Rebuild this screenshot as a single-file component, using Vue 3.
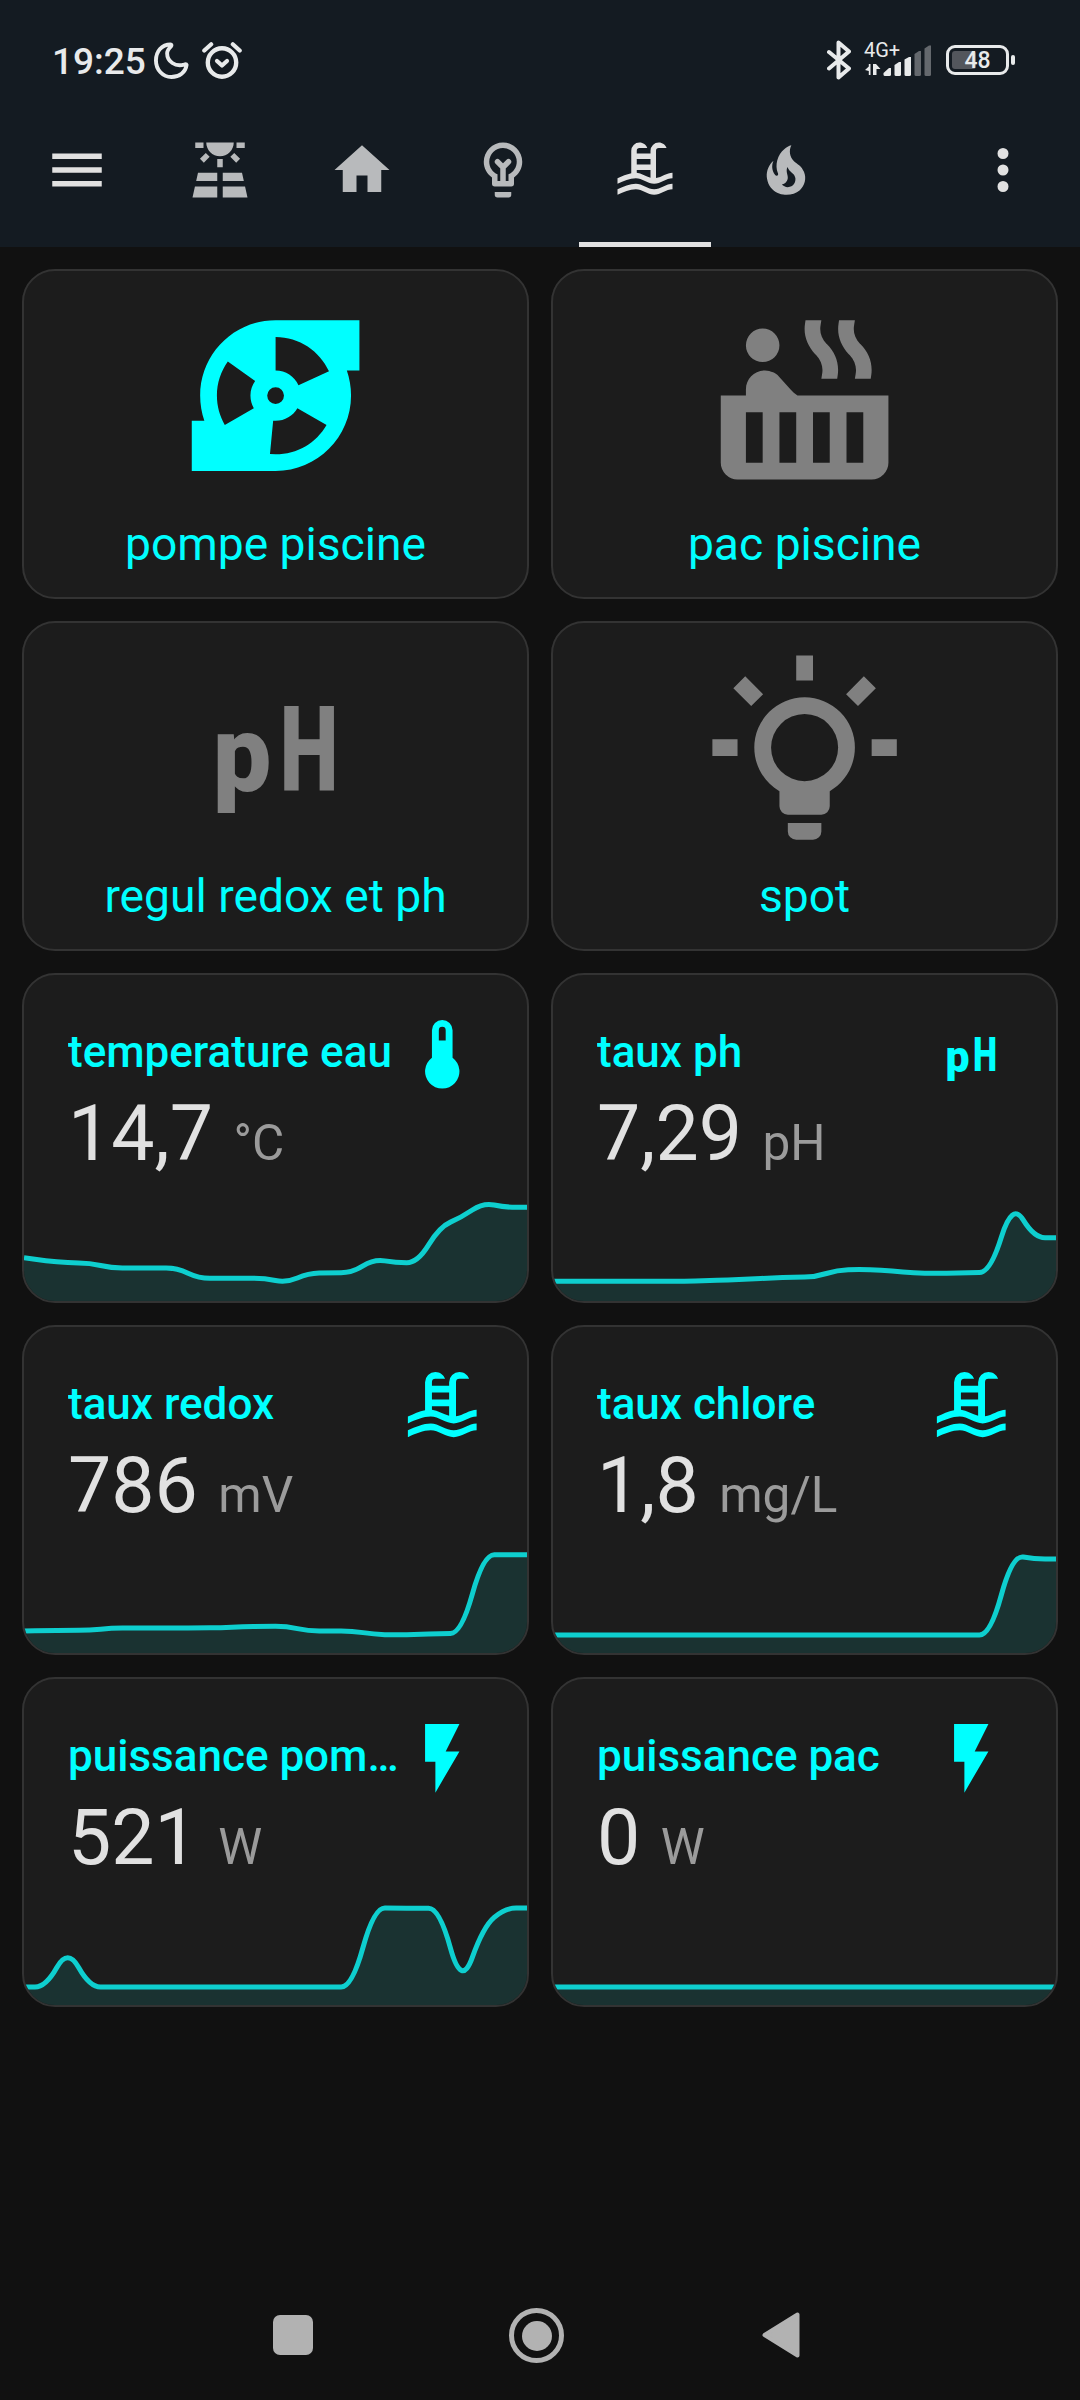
<template>
  <div class="screen">
    <header class="app-header">
      <!-- status bar -->
      <div class="status-bar">
        <span class="time">19:25</span>
        <svg class="moon" viewBox="0 0 36 38">
          <path
            d="M17 2.5C8 2.5 2 9.500 2 19C2 28.500 9 36 18 36C26 36 32.500 31 33.500 23.500C33.200 22.500 32 22.800 31 23.200C22 26 13.500 20 13.500 11.500C13.500 8.500 15.500 6.500 17.500 4.500C18.300 3.500 18 2.500 17 2.500Z"
            fill="none"
            stroke="#e8eaeb"
            stroke-width="4"
            stroke-linejoin="round"
          />
        </svg>
        <svg class="alarm" viewBox="0 0 40 38">
          <g fill="none" stroke="#e8eaeb" stroke-width="4.200" stroke-linecap="round">
            <circle cx="20" cy="21.500" r="14.200" stroke-width="4.400" />
            <path d="M2.300 9.500L9.200 3.300M37.700 9.500L30.800 3.300" />
            <path d="M15 20L20 24.500L25 20" stroke-linejoin="round" />
          </g>
        </svg>
        <div class="status-right">
          <svg class="bluetooth" viewBox="0 0 24 40">
            <path
              d="M2 12L22 28.500L11.500 37.500V2.500L22 11.500L2 28.500"
              fill="none"
              stroke="#e8eaeb"
              stroke-width="4"
              stroke-linejoin="round"
              stroke-linecap="round"
            />
          </svg>
          <div class="mobile">
            <span class="network">4G+</span>
            <svg class="signal" viewBox="0 0 68 32">
              <g fill="#e8eaeb">
                <path d="M5.500 20V31H3.800L3.800 27L0 26L3.800 22.500V20ZM8 20H11L15.500 25H11.500V31H8Z" />
                <path d="M18.500 29L24 24H26V30.500Q26 32 24.500 32H20Q18.500 32 18.500 30.500Z" />
                <path d="M29.500 21L34 18H36V30.500Q36 32 34.500 32H31Q29.500 32 29.500 30.500Z" />
                <path d="M39.500 15.500L44 13H46V30.500Q46 32 44.500 32H41Q39.500 32 39.500 30.500Z" />
              </g>
              <g fill="#64686d">
                <path d="M49.500 10L54 7H56V30.500Q56 32 54.500 32H51Q49.500 32 49.500 30.500Z" />
                <path d="M59.500 4.500L64 1.500H66V30.500Q66 32 64.500 32H61Q59.500 32 59.500 30.500Z" />
              </g>
            </svg>
          </div>
          <div class="battery">
            <div class="battery-level"></div>
            <span class="battery-text">48</span>
          </div>
          <div class="battery-nub"></div>
        </div>
      </div>

      <!-- toolbar -->
      <div class="toolbar">
        <button class="icon-btn">
          <svg viewBox="0 0 24 24"><path :d="icons.menu" /></svg>
        </button>
        <nav class="tabs">
          <div
            v-for="tab in tabs"
            :key="tab"
            class="tab"
            :class="{ active: tab === activeTab }"
            @click="activeTab = tab"
          >
            <svg viewBox="0 0 24 24">
              <path :d="icons[tab]" fill-rule="evenodd" />
              <path
                v-if="tab === 'bulb'"
                class="filament"
                d="M12 16.500V11M10 9L12 11L14 9"
              />
            </svg>
          </div>
        </nav>
        <button class="icon-btn">
          <svg viewBox="0 0 24 24"><path :d="icons.dots" /></svg>
        </button>
      </div>
    </header>

    <main class="grid">
      <div v-for="btn in buttons" :key="btn.name" class="card button-card">
        <svg class="big-icon" :class="{ on: btn.on }" viewBox="0 0 24 24">
          <g v-if="btn.icon === 'ph'" class="ph-text">
            <text x="4.5" y="17.2" font-size="12.8" textLength="7" lengthAdjust="spacingAndGlyphs">p</text>
            <text x="12.5" y="17" font-size="14.060" textLength="7" lengthAdjust="spacingAndGlyphs">H</text>
          </g>
          <path v-else :d="icons[btn.icon]" fill-rule="evenodd" />
        </svg>
        <div class="button-name">{{ btn.name }}</div>
      </div>

      <div v-for="sensor in sensors" :key="sensor.name" class="card sensor-card">
        <div class="sensor-header">
          <div class="sensor-name">{{ sensor.name }}</div>
          <svg class="sensor-icon" viewBox="0 0 24 24">
            <g v-if="sensor.icon === 'ph'" class="ph-text">
              <text x="4.5" y="17.2" font-size="12.8" textLength="7" lengthAdjust="spacingAndGlyphs">p</text>
              <text x="12.5" y="17" font-size="14.060" textLength="7" lengthAdjust="spacingAndGlyphs">H</text>
            </g>
            <path v-else :d="icons[sensor.icon]" fill-rule="evenodd" />
          </svg>
        </div>
        <div class="sensor-state">
          <span class="value">{{ sensor.value }}</span>
          <span class="unit">{{ sensor.unit }}</span>
        </div>
        <svg class="graph" viewBox="0 0 503 110">
          <path class="area" :d="linePath(sensor.points) + ' V110 H0 Z'" />
          <path class="line" :d="linePath(sensor.points)" />
        </svg>
      </div>
    </main>

    <!-- android navigation -->
    <footer class="nav-bar">
      <div><span class="nav-recent"></span></div>
      <div><span class="nav-home"></span></div>
      <div>
        <svg class="nav-back" viewBox="0 0 38 46">
          <path
            d="M2.500 23L35.500 2.500V43.500Z"
            fill="#b2b2b2"
            stroke="#b2b2b2"
            stroke-width="4"
            stroke-linejoin="round"
          />
        </svg>
      </div>
    </footer>
  </div>
</template>

<script setup>
import { ref } from "vue";

const icons = {
  menu: "M3,6H21V8H3V6M3,11H21V13H3V11M3,16H21V18H3V16Z",
  dots: "M12,16A2,2 0 0,1 14,18A2,2 0 0,1 12,20A2,2 0 0,1 10,18A2,2 0 0,1 12,16M12,10A2,2 0 0,1 14,12A2,2 0 0,1 12,14A2,2 0 0,1 10,12A2,2 0 0,1 12,10M12,4A2,2 0 0,1 14,6A2,2 0 0,1 12,8A2,2 0 0,1 10,6A2,2 0 0,1 12,4Z",
  solar:
    "M3.33 16H11V13H4L3.33 16M13 16H20.67L20 13H13V16M21.11 18H13V22H22L21.11 18M2 22H11V18H2.89L2 22M11 8H13V11H11V8M15.76 7.21L17.18 5.79L19.3 7.91L17.89 9.33L15.76 7.21M4.71 7.91L6.83 5.79L8.24 7.21L6.12 9.33L4.71 7.91M3 2H6V4H3V2M18 2H21V4H18V2M12 7C14.76 7 17 4.76 17 2H7C7 4.76 9.24 7 12 7Z",
  home: "M10,20V14H14V20H19V12H22L12,3L2,12H5V20H10Z",
  bulb: "M12,2A7,7 0 0,1 19,9C19,11.38 17.81,13.47 16,14.74V17A1,1 0 0,1 15,18H9A1,1 0 0,1 8,17V14.74C6.19,13.47 5,11.38 5,9A7,7 0 0,1 12,2M9,21V20H15V21A1,1 0 0,1 14,22H10A1,1 0 0,1 9,21M12,4A5,5 0 0,0 7,9C7,11.05 8.23,12.81 10,13.58V16H14V13.58C15.77,12.81 17,11.05 17,9A5,5 0 0,0 12,4Z",
  pool: "M2,15C3.67,14.25 5.33,13.5 7,13.17V5A3,3 0 0,1 10,2C11.31,2 12.42,2.83 12.83,4H10A1,1 0 0,0 9,5V6H14V5A3,3 0 0,1 17,2C18.31,2 19.42,2.83 19.83,4H17A1,1 0 0,0 16,5V14.94C18,14.62 20,13 22,13V15C19.78,15 17.56,17 15.33,17C13.11,17 10.89,15 8.67,15C6.44,15 4.22,16 2,17V15M14,8H9V10H14V8M14,12H9V13C10.67,13.16 12.33,14.31 14,14.79V12M2,19C4.22,18 6.44,17 8.67,17C10.89,17 13.11,19 15.33,19C17.56,19 19.78,17 22,17V19C19.78,19 17.56,21 15.33,21C13.11,21 10.89,19 8.67,19C6.44,19 4.22,20 2,21V19Z",
  fire: "M17.66 11.2C17.43 10.9 17.15 10.64 16.89 10.38C16.22 9.78 15.46 9.35 14.82 8.72C13.33 7.26 13 4.85 13.95 3C13 3.23 12.17 3.75 11.46 4.32C8.87 6.4 7.85 10.07 9.07 13.22C9.11 13.32 9.15 13.42 9.15 13.55C9.15 13.77 9 13.97 8.8 14.05C8.57 14.15 8.33 14.09 8.14 13.93C8.08 13.88 8.04 13.83 8 13.76C6.87 12.33 6.69 10.28 7.45 8.64C5.78 10 4.87 12.3 5 14.47C5.06 14.97 5.12 15.47 5.29 15.97C5.43 16.57 5.7 17.17 6 17.7C7.08 19.43 8.95 20.67 10.96 20.92C13.1 21.19 15.39 20.8 17.03 19.32C18.86 17.66 19.5 15 18.56 12.72L18.43 12.46C18.22 12 17.66 11.2 17.66 11.2M14.5 17.5C14.22 17.74 13.76 18 13.4 18.1C12.28 18.5 11.16 17.94 10.5 17.28C11.69 17 12.4 16.12 12.61 15.23C12.78 14.43 12.46 13.77 12.33 13C12.21 12.26 12.23 11.63 12.5 10.94C12.69 11.32 12.89 11.7 13.13 12C13.9 13 15.11 13.44 15.37 14.8C15.41 14.94 15.43 15.08 15.43 15.23C15.46 16.05 15.1 16.95 14.5 17.5Z",
  pump: "M2 21V15H3.5C3.18 14.06 3 13.05 3 12C3 7.03 7.03 3 12 3H22V9H20.5C20.82 9.94 21 10.95 21 12C21 16.97 16.97 21 12 21H2M5 12C5 13.28 5.34 14.47 5.94 15.5L9.4 13.5C9.15 13.06 9 12.55 9 12C9 11.35 9.21 10.75 9.56 10.26L6.3 7.93C5.48 9.08 5 10.5 5 12M12 19C14.59 19 16.85 17.64 18.08 15.5L14.6 13.5C14.08 14.4 13.11 15 12 15L11.71 15L11.33 18.97L12 19M12 9C13.21 9 14.26 9.72 14.73 10.76L18.37 9.1C17.27 6.68 14.83 5 12 5V9M12 11A1 1 0 0 0 11 12A1 1 0 0 0 12 13A1 1 0 0 0 13 12A1 1 0 0 0 12 11Z",
  hotTub:
    "M7 4A2 2 0 0 1 9 6A2 2 0 0 1 7 8A2 2 0 0 1 5 6A2 2 0 0 1 7 4M11.15 12H22V20A2 2 0 0 1 20 22H4A2 2 0 0 1 2 20V12H5V11.25C5 10 6 9 7.25 9H7.28C7.62 9 7.95 9.09 8.24 9.23C8.5 9.35 8.74 9.5 8.93 9.73L10.33 11.28C10.56 11.55 10.84 11.78 11.15 12M7 20V14H5V20H7M11 20V14H9V20H11M15 20V14H13V20H15M19 20V14H17V20H19M18.65 5.86C19.68 6.86 20.16 8.21 19.95 9.57L19.89 10H18L18.09 9.41C18.24 8.62 18 7.83 17.37 7.15L17.24 7.03C16.32 6 15.84 4.75 16.05 3.43L16.11 3H18L17.91 3.59C17.76 4.38 18 5.17 18.63 5.85L18.65 5.86M14.65 5.86C15.68 6.86 16.16 8.21 15.95 9.57L15.89 10H14L14.09 9.41C14.24 8.62 14 7.83 13.37 7.15L13.24 7.03C12.32 6 11.84 4.75 12.05 3.43L12.11 3H14L13.91 3.59C13.76 4.38 14 5.17 14.63 5.85L14.65 5.86Z",
  spot: "M20,11H23V13H20V11M1,11H4V13H1V11M13,1V4H11V1H13M4.92,3.5L7.05,5.64L5.63,7.05L3.5,4.93L4.92,3.5M16.95,5.63L19.07,3.5L20.5,4.93L18.37,7.05L16.95,5.63M12,6A6,6 0 0,1 18,12C18,14.22 16.79,16.16 15,17.2V19A1,1 0 0,1 14,20H10A1,1 0 0,1 9,19V17.2C7.21,16.16 6,14.22 6,12A6,6 0 0,1 12,6M14,21V22A1,1 0 0,1 13,23H11A1,1 0 0,1 10,22V21H14M12,8A4,4 0 0,0 8,12A4,4 0 0,0 12,16A4,4 0 0,0 16,12A4,4 0 0,0 12,8Z",
  thermometer:
    "M15 13V5A3 3 0 0 0 9 5V13A5 5 0 1 0 15 13M12 4A1 1 0 0 1 13 5V8H11V5A1 1 0 0 1 12 4Z",
  flash: "M7,2V13H10V22L17,10H13L17,2H7Z",
};

const tabs = ["solar", "home", "bulb", "pool", "fire"];
const activeTab = ref("pool");

const buttons = [
  { name: "pompe piscine", icon: "pump", on: true },
  { name: "pac piscine", icon: "hotTub", on: false },
  { name: "regul redox et ph", icon: "ph", on: false },
  { name: "spot", icon: "spot", on: false },
];

// n values in a row with the same height
const flat = (n, y) => Array(n).fill(y);

const sensors = [
  {
    name: "temperature eau",
    icon: "thermometer",
    value: "14,7",
    unit: "°C",
    points: [
      66.7, 69.7, 72, 72, ...flat(4, 77), ...flat(4, 87.3), 91.7, 82.3, 81.7,
      81.7, 68, 71.7, 71.7, 36, 26.3, 11.7, 16.3, 16.3,
    ],
  },
  {
    name: "taux ph",
    icon: "ph",
    value: "7,29",
    unit: "pH",
    points: [
      ...flat(7, 90.3), 89.7, 89, 88, 87, 86, 86, 79, 78.3, 79, 81, 82.3, 82.3,
      81.7, 81.3, 11, 46.7, 46.7,
    ],
  },
  {
    name: "taux redox",
    icon: "pool",
    value: "786",
    unit: "mV",
    points: [
      88, 87.7, 87.3, 87.3, ...flat(5, 85), 84.7, 83.7, 83.3, 83.3,
      ...flat(3, 88), 91.3, 92, 91.3, 90.7, 90.3, 12, 11.7, 11.7,
    ],
  },
  {
    name: "taux chlore",
    icon: "pool",
    value: "1,8",
    unit: "mg/L",
    points: [...flat(21, 92), 12, 16, 16],
  },
  {
    name: "puissance pompe piscine",
    icon: "flash",
    value: "521",
    unit: "W",
    points: [
      92, 92, 53, ...flat(13, 92), 13, 13, 13.3, 13.3, 93, 31.7, 13, 13,
    ],
  },
  {
    name: "puissance pac",
    icon: "flash",
    value: "0",
    unit: "W",
    points: flat(24, 92),
  },
];

// smooth line, the curve goes through the middle of each segment
const linePath = (points) => {
  const step = 503 / (points.length - 1);
  let d = `M0,${points[0]}`;
  for (let i = 1; i < points.length; i++) {
    const midX = (i - 0.5) * step;
    const midY = (points[i - 1] + points[i]) / 2;
    d += ` ${midX},${midY} Q${i * step},${points[i]}`;
  }
  return d + ` 503,${points[points.length - 1]}`;
};
</script>

<style>
body {
  background: #111111;
}
</style>

<style scoped>
.screen {
  width: 1080px;
  height: 2400px;
  display: flex;
  flex-direction: column;
  background: #111111;
  color: #e1e1e1;
  font-family: Roboto, sans-serif;
  overflow: hidden;
}

svg {
  display: block;
  fill: currentColor;
  flex: none;
}

.app-header {
  height: 247px;
  background: #141b22;
}

/* status bar */
.status-bar {
  display: flex;
  align-items: flex-start;
  height: 93px;
  padding: 0 65px 0 52px;
  box-sizing: border-box;
  color: #e8eaeb;
}

.time {
  width: 102px;
  margin-top: 40px;
  font-size: 37px;
  line-height: 44px;
  font-weight: 500;
}

.moon {
  width: 35px;
  height: 37px;
  margin-top: 42px;
}

.alarm {
  width: 40px;
  height: 38px;
  margin: 41px 0 0 13px;
}

.status-right {
  display: flex;
  align-items: flex-start;
  margin-left: auto;
}

.bluetooth {
  width: 24px;
  height: 40px;
  margin-top: 40px;
}

.mobile {
  position: relative;
  width: 68px;
  height: 32px;
  margin: 44px 0 0 14px;
}

.signal {
  width: 68px;
  height: 32px;
}

.network {
  position: absolute;
  left: -1px;
  top: -6px;
  font-size: 20px;
  line-height: 24px;
}

.battery {
  position: relative;
  width: 63px;
  height: 30px;
  margin: 45px 0 0 13px;
  border: 3px solid #e8eaeb;
  border-radius: 9px;
  box-sizing: border-box;
  text-align: center;
}

.battery-level {
  position: absolute;
  left: 3px;
  top: 3px;
  width: 24px;
  height: 18px;
  border-radius: 3px;
  background: #53565c;
}

.battery-text {
  position: relative;
  display: block;
  font-size: 23px;
  line-height: 26px;
  font-weight: 500;
}

.battery-nub {
  width: 4px;
  height: 10px;
  margin: 55px 0 0 2px;
  border-radius: 2px;
  background: #e8eaeb;
}

/* toolbar */
.toolbar {
  display: flex;
  height: 154px;
  padding: 0 11px;
}

.icon-btn {
  display: flex;
  align-items: center;
  justify-content: center;
  width: 132px;
  padding: 0;
  border: 0;
  background: none;
  color: #e1e1e1;
}

.icon-btn svg,
.tab svg {
  width: 66px;
  height: 66px;
}

.tabs {
  flex: 1;
  display: flex;
  padding-left: 6.5px;
}

.tab {
  display: flex;
  align-items: center;
  justify-content: center;
  width: 141.5px;
  color: #b8babc;
}

.tab.active {
  color: #e1e1e1;
  background: linear-gradient(#e1e1e1, #e1e1e1) center bottom / 132px 5px no-repeat;
}

.filament {
  fill: none;
  stroke: currentColor;
  stroke-width: 2;
  stroke-linecap: round;
  stroke-linejoin: round;
}

/* cards */
.grid {
  flex: 1;
  display: grid;
  grid-template-columns: 1fr 1fr;
  grid-auto-rows: 330px;
  gap: 22px;
  padding: 22px;
}

.card {
  display: flex;
  flex-direction: column;
  box-sizing: border-box;
  min-width: 0;
  background: #1c1c1c;
  border: 2px solid #333333;
  border-radius: 33px;
  overflow: hidden;
}

.button-card {
  align-items: center;
  padding-top: 24px;
}

.big-icon {
  width: 201.2px;
  height: 201.2px;
  color: #808080;
}

.big-icon.on {
  color: #00ffff;
}

.ph-text {
  font-family: Roboto, sans-serif;
  font-weight: 900;
}

.button-name {
  margin-top: 21px;
  font-size: 46.2px;
  line-height: 54px;
  color: #00ffff;
}

.sensor-card {
  padding-top: 38px;
}

.sensor-header {
  display: flex;
  justify-content: space-between;
  height: 81px;
  padding: 0 44px;
}

.sensor-name {
  margin-top: 13px;
  font-size: 44px;
  line-height: 52px;
  font-weight: 500;
  color: #00ffff;
  white-space: nowrap;
  overflow: hidden;
  text-overflow: ellipsis;
}

.sensor-icon {
  width: 82.5px;
  height: 82.5px;
  color: #00ffff;
}

.sensor-state {
  display: flex;
  align-items: baseline;
  gap: 20.5px;
  height: 80px;
  padding: 0 44px;
  line-height: 80px;
  white-space: nowrap;
}

.value {
  font-size: 77px;
}

.unit {
  font-size: 49.5px;
  color: #9b9b9b;
}

.graph {
  width: 503px;
  height: 110px;
  margin-top: auto;
}

.area {
  fill: #1a3231;
}

.line {
  fill: none;
  stroke: #0ecfcf;
  stroke-width: 5;
}

/* navigation bar */
.nav-bar {
  display: grid;
  grid-template-columns: repeat(3, 244px);
  height: 130px;
  padding-left: 170.5px;
}

.nav-bar div {
  display: flex;
  align-items: center;
  justify-content: center;
}

.nav-recent {
  width: 40px;
  height: 40px;
  border-radius: 7px;
  background: #b2b2b2;
}

.nav-home {
  width: 55px;
  height: 55px;
  box-sizing: border-box;
  border: 5px solid #b2b2b2;
  border-radius: 50%;
  padding: 7.5px;
  background: #b2b2b2 content-box;
  background-clip: content-box;
}

.nav-back {
  width: 38px;
  height: 46px;
}
</style>
